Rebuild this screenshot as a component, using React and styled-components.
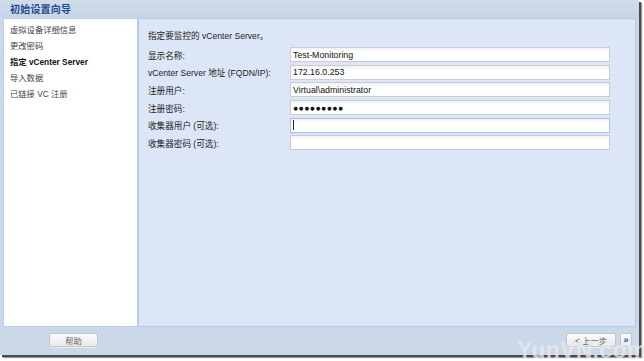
import styled, { createGlobalStyle } from 'styled-components';

const Global = createGlobalStyle`
    html, body {
        margin: 0;
        padding: 0;
        background: #fff;
    }
    body {
        font-family: "Liberation Sans", "Noto Sans CJK SC", sans-serif;
        font-size: 8.6px;
        color: #222;
    }
`;

const Stage = styled.div`
    position: relative;
    width: 644px;
    height: 361px;
    overflow: hidden;
`;

const Window = styled.div`
    width: 639px;
    height: 355px;
    background: #cbd8e8;
    box-shadow: 2px 2px 0 #4a4a4a, 3px 3px 1px #9a9a9a;
    display: flex;
    flex-direction: column;
`;

const TitleBar = styled.div`
    height: 17px;
    flex: none;
    display: flex;
    align-items: center;
    padding-left: 10px;
    background: linear-gradient(#d0dcea, #c6d4e6);
    color: #1d4a8c;
    font-size: 10px;
    font-weight: bold;
    letter-spacing: 0.2px;
`;

const Body = styled.div`
    height: 309px;
    margin-top: 1px;
    padding: 0 3px;
    display: flex;
`;

const Nav = styled.ul`
    flex: none;
    width: 135px;
    margin: 0;
    padding: 3px 0 0 6px;
    list-style: none;
    background: #fff;
    border: 1px solid #b7cdea;
    box-sizing: border-box;
`;

const NavItem = styled.li`
    height: 16px;
    line-height: 16px;
    font-size: 8.3px;
    color: ${p => (p.active ? '#111' : '#444')};
    font-weight: ${p => (p.active ? 'bold' : 'normal')};
`;

const Panel = styled.div`
    flex: 1;
    background: #dde6f6;
    border: 1px solid #b3cbea;
    box-sizing: border-box;
    padding: 11px 0 0 9px;
`;

const Heading = styled.div`
    height: 12px;
    line-height: 12px;
    margin-bottom: 5px;
`;

const Form = styled.div`
    display: grid;
    grid-template-columns: 142px 320px;
    grid-auto-rows: 15px;
    row-gap: 2.7px;
`;

const Label = styled.label`
    display: flex;
    align-items: center;
`;

const Field = styled.div`
    box-sizing: border-box;
    border: 1px solid ${p => (p.focused ? '#a4c3e4' : '#c9ccd3')};
    background: linear-gradient(#f1f1f1, #fff 4px);
    display: flex;
    align-items: center;
    padding-left: 2px;
    font-size: 8.8px;
    color: #111;
    letter-spacing: ${p => (p.secret ? '0.3px' : '0')};
`;

const Caret = styled.span`
    display: inline-block;
    width: 1px;
    height: 10px;
    background: #222;
`;

const Footer = styled.div`
    flex: 1;
    display: flex;
    justify-content: space-between;
    align-items: flex-start;
    padding: 6px 7px 0 49px;
`;

const Button = styled.button`
    width: ${p => p.w || 49}px;
    height: 14px;
    padding: 0;
    border: 1px solid #c3c6cc;
    border-radius: 2px;
    background: linear-gradient(#fbfbfb, #e9e9e9);
    font-family: inherit;
    font-size: 8.3px;
    color: #666;
    box-shadow: 0 1px 0 #e8eef5;
`;

const RightButtons = styled.div`
    display: flex;
    gap: 4px;
`;

const MoreButton = styled(Button)`
    width: 12px;
    color: #1b4c9c;
    font-weight: bold;
    font-size: 9px;
    line-height: 10px;
`;

/* site watermark stamped over the bottom-right corner of the screenshot */
const Watermark = styled.div`
    position: absolute;
    left: 517px;
    top: 337px;
    font-family: "Liberation Sans", sans-serif;
    font-weight: bold;
    font-size: 23px;
    letter-spacing: 0.3px;
    color: rgba(232, 232, 232, 0.8);
    pointer-events: none;
`;

const steps = [
    '虚拟设备详细信息',
    '更改密码',
    '指定 vCenter Server',
    '导入数据',
    '已链接 VC 注册',
];

const fields = [
    { label: '显示名称:', value: 'Test-Monitoring' },
    { label: 'vCenter Server 地址 (FQDN/IP):', value: '172.16.0.253' },
    { label: '注册用户:', value: 'Virtual\\administrator' },
    { label: '注册密码:', value: '●●●●●●●●●', secret: true },
    { label: '收集器用户 (可选):', focused: true },
    { label: '收集器密码 (可选):' },
];

const App = () => (
    <Stage>
        <Global />
        <Window>
            <TitleBar>初始设置向导</TitleBar>
            <Body>
                <Nav>
                    {steps.map((s, i) => (
                        <NavItem key={i} active={i === 2}>{s}</NavItem>
                    ))}
                </Nav>
                <Panel>
                    <Heading>指定要监控的 vCenter Server。</Heading>
                    <Form>
                        {fields.map((f, i) => [
                            <Label key={'l' + i}>{f.label}</Label>,
                            <Field key={'f' + i} focused={f.focused} secret={f.secret}>
                                {f.focused ? <Caret /> : f.value}
                            </Field>,
                        ])}
                    </Form>
                </Panel>
            </Body>
            <Footer>
                <Button>帮助</Button>
                <RightButtons>
                    <Button w={50}>&lt; 上一步</Button>
                    <MoreButton>»</MoreButton>
                </RightButtons>
            </Footer>
        </Window>
        <Watermark>YunVN.com</Watermark>
    </Stage>
);

export default App;
